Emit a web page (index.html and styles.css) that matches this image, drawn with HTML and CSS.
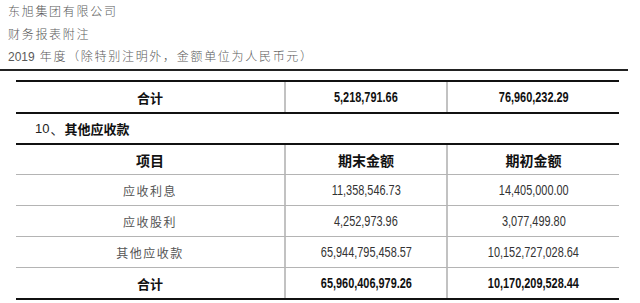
FILE: index.html
```html
<!DOCTYPE html>
<html lang="zh-CN">
<head>
    <meta charset="UTF-8">
    <meta name="viewport" content="width=device-width, initial-scale=1.0">
    <title>东旭集团有限公司 财务报表附注</title>
    <link rel="stylesheet" href="styles.css">
</head>
<body>

    <!-- 页眉 -->
    <div class="header">
        <div>东旭集团有限公司</div>
        <div>财务报表附注</div>
        <div><span class="year">2019</span> 年度（除特别注明外，金额单位为人民币元）</div>
    </div>

    <!-- 上一节合计 -->
    <div class="sheet first">
        <div class="row total">
            <div class="cell">合计</div>
            <div class="cell"><span class="num">5,218,791.66</span></div>
            <div class="cell"><span class="num">76,960,232.29</span></div>
        </div>
    </div>

    <div class="section-title"><span class="year">10</span>、<b>其他应收款</b></div>

    <!-- 其他应收款 -->
    <div class="sheet">
        <div class="row head">
            <div class="cell">项目</div>
            <div class="cell">期末金额</div>
            <div class="cell">期初金额</div>
        </div>
        <div class="row">
            <div class="cell label">应收利息</div>
            <div class="cell"><span class="num">11,358,546.73</span></div>
            <div class="cell"><span class="num">14,405,000.00</span></div>
        </div>
        <div class="row">
            <div class="cell label">应收股利</div>
            <div class="cell"><span class="num">4,252,973.96</span></div>
            <div class="cell"><span class="num">3,077,499.80</span></div>
        </div>
        <div class="row">
            <div class="cell label">其他应收款</div>
            <div class="cell"><span class="num">65,944,795,458.57</span></div>
            <div class="cell"><span class="num">10,152,727,028.64</span></div>
        </div>
        <div class="row total last">
            <div class="cell">合计</div>
            <div class="cell"><span class="num">65,960,406,979.26</span></div>
            <div class="cell"><span class="num">10,170,209,528.44</span></div>
        </div>
    </div>

</body>
</html>
```

FILE: styles.css
```css
/* Página */
body {
    margin: 0;
    padding: 0;
    background: #fff;
    color: #222;
    font-family: "Liberation Sans", "Noto Sans CJK SC", sans-serif;
}

/* Cifras estrechas, como Arial Narrow */
.num {
    display: inline-block;
    font-family: "Liberation Sans", sans-serif;
    font-size: 14px;
    transform: scaleX(0.78);
    white-space: nowrap;
}

.year {
    font-family: "Liberation Sans", sans-serif;
}

/* Encabezado */
.header {
    height: 68px;
    padding: 1px 0 0 8px;
    margin-right: 12px;
    border-bottom: 2px solid #222;
    font-size: 12px;
    line-height: 22.5px;
    letter-spacing: 1.7px;
    color: #5a5a5a;
    font-weight: 300;
}

.header .year {
    letter-spacing: 0;
    font-weight: normal;
}

/* Tablas */
.sheet {
    width: 603px;
    margin-left: 16px;
    border-top: 2px solid #111;
    border-bottom: 2px solid #111;
}

.sheet.first {
    margin-top: 9px;
}

.row {
    display: grid;
    grid-template-columns: 268px 162px 173px;
    height: 31px;
    border-bottom: 1px solid #b4b4b4;
    box-sizing: border-box;
}

.row.head {
    height: 30px;
}

.row.last,
.first .row {
    border-bottom: none;
    height: 30px;
}

.cell {
    display: flex;
    align-items: center;
    justify-content: center;
    font-size: 13px;
}

.cell + .cell {
    border-left: 2px solid #c2c2c2;
}

.head .cell,
.total .cell {
    font-weight: bold;
    color: #111;
}

.head .cell {
    font-size: 14px;
}

.cell.label {
    font-size: 12px;
    letter-spacing: 1.5px;
    color: #555;
}

.cell .num {
    color: #333;
}

.total .cell .num {
    color: #111;
}

/* Título de sección */
.section-title {
    height: 29px;
    padding-left: 35px;
    display: flex;
    align-items: center;
    font-size: 13px;
    color: #222;
}

.section-title .year {
    margin-right: 1px;
}

.section-title b {
    color: #111;
    margin-left: 1px;
}
```
